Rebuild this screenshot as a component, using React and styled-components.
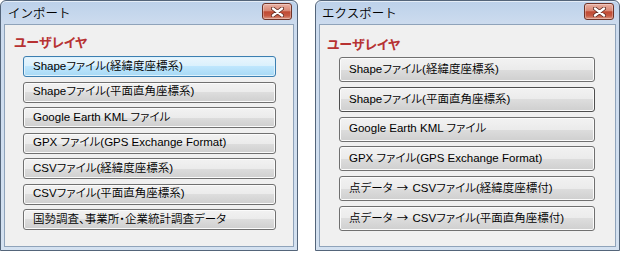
import styled, { createGlobalStyle } from "styled-components";

const GlobalStyle = createGlobalStyle`
  body {
    margin: 0;
    background: #fff;
    font-family: "Liberation Sans", "Noto Sans CJK JP", sans-serif;
  }
`;

const Screen = styled.div`
  display: flex;
  align-items: flex-start;
  gap: 17px;
  width: 622px;
  height: 255px;
`;

const Window = styled.div`
  box-sizing: border-box;
  width: ${(p) => p.$width}px;
  height: 251px;
  display: flex;
  flex-direction: column;
  border: 1px solid #54657a;
  border-radius: 6px 6px 0 0;
  padding: 0 3px 3px;
  background: linear-gradient(180deg, #bcd1ea 0px, #ccdbee 22px, #d4e1f0 100%);
  box-shadow: inset 0 1px 0 rgba(255, 255, 255, 0.6);
`;

const TitleBar = styled.div`
  height: 23px;
  display: flex;
  align-items: center;
  justify-content: space-between;
  padding: 0 2px 0 ${(p) => p.$inset}px;
`;

const Title = styled.span`
  font-family: "Noto Sans CJK JP", sans-serif;
  font-size: 12.5px;
  font-weight: 350;
  color: #000;
`;

const CloseButton = styled.div`
  box-sizing: border-box;
  width: 30px;
  height: 17px;
  margin-top: -2px;
  display: flex;
  align-items: center;
  justify-content: center;
  border: 1px solid #6f3327;
  border-radius: 3px;
  background: linear-gradient(
    180deg,
    #eab1a3 0%,
    #d98875 45%,
    #c04a33 52%,
    #c65a43 78%,
    #dd9a86 100%
  );
  box-shadow: inset 0 0 0 1px rgba(255, 255, 255, 0.3);
`;

const Client = styled.div`
  flex: 1;
  display: flex;
  flex-direction: column;
  background: #f0f0f0;
  border: 1px solid #8fa3ba;
  padding: ${(p) => p.$top}px 0 0 ${(p) => p.$left}px;
`;

const SectionLabel = styled.div`
  font-family: "Noto Sans CJK JP", sans-serif;
  font-size: 13px;
  line-height: 16px;
  font-weight: bold;
  color: #b73232;
  font-feature-settings: "palt";
  margin-bottom: ${(p) => p.$after}px;
`;

const ButtonList = styled.div`
  display: flex;
  flex-direction: column;
  gap: ${(p) => p.$gap}px;
  margin: 0 ${(p) => p.$right}px 0 ${(p) => p.$indent}px;
`;

const ActionButton = styled.button`
  box-sizing: border-box;
  height: ${(p) => p.$height}px;
  padding: 0 0 0 9px;
  text-align: left;
  font-family: "Liberation Sans", "Noto Sans CJK JP", sans-serif;
  font-size: 11.5px;
  font-weight: 350;
  line-height: 1;
  color: #000;
  font-feature-settings: "palt";
  border: 1px solid ${(p) => (p.$hot ? "#3c7fb1" : p.$focused ? "#4e4e4e" : "#707070")};
  border-radius: 3px;
  box-shadow: inset 0 0 0 1px ${(p) => (p.$hot ? "#dff2fc" : "#fbfbfb")};
  background: ${(p) =>
    p.$hot
      ? "linear-gradient(180deg, #eaf6fd 0%, #d9f0fc 50%, #bee6fd 50%, #a7d9f5 100%)"
      : "linear-gradient(180deg, #f2f2f2 0%, #ebebeb 50%, #dddddd 50%, #cfcfcf 100%)"};
  cursor: default;
`;

const Arrow = styled.span`
  font-family: "Noto Sans CJK JP", sans-serif;
  font-feature-settings: normal;
  margin: 0 1px;
`;

const CloseIcon = () => (
  <svg width="13" height="10" viewBox="0 0 13 10">
    <path d="M2 1.5 L11 8.5 M11 1.5 L2 8.5" stroke="#5e2a20" strokeWidth="4" strokeLinecap="round" />
    <path d="M2 1.5 L11 8.5 M11 1.5 L2 8.5" stroke="#ffffff" strokeWidth="2.4" strokeLinecap="round" />
  </svg>
);

// the arrow glyph comes from the CJK font so it keeps its full width
const ButtonLabel = ({ text }) => {
  const parts = text.split("→");
  if (parts.length === 1) return text;
  return (
    <>
      {parts[0]}
      <Arrow>→</Arrow>
      {parts[1]}
    </>
  );
};

const importItems = [
  "Shapeファイル(経緯度座標系)",
  "Shapeファイル(平面直角座標系)",
  "Google Earth KML ファイル",
  "GPX ファイル(GPS Exchange Format)",
  "CSVファイル(経緯度座標系)",
  "CSVファイル(平面直角座標系)",
  "国勢調査、事業所・企業統計調査データ",
];

const exportItems = [
  "Shapeファイル(経緯度座標系)",
  "Shapeファイル(平面直角座標系)",
  "Google Earth KML ファイル",
  "GPX ファイル(GPS Exchange Format)",
  "点データ → CSVファイル(経緯度座標付)",
  "点データ → CSVファイル(平面直角座標付)",
];

const Dialog = ({ title, items, width, layout, hotIndex, focusIndex }) => (
  <Window $width={width}>
    <TitleBar $inset={layout.titleInset}>
      <Title>{title}</Title>
      <CloseButton>
        <CloseIcon />
      </CloseButton>
    </TitleBar>
    <Client $top={layout.top} $left={layout.labelLeft}>
      <SectionLabel $after={layout.labelAfter}>ユーザレイヤ</SectionLabel>
      <ButtonList $gap={layout.gap} $indent={layout.indent} $right={layout.right}>
        {items.map((label, i) => (
          <ActionButton
            key={label}
            $height={layout.buttonHeight}
            $hot={i === hotIndex}
            $focused={i === focusIndex}
          >
            <ButtonLabel text={label} />
          </ActionButton>
        ))}
      </ButtonList>
    </Client>
  </Window>
);

export default function App() {
  return (
    <>
      <GlobalStyle />
      <Screen>
        <Dialog
          title="インポート"
          items={importItems}
          width={298}
          hotIndex={0}
          layout={{
            titleInset: 4,
            top: 9,
            labelLeft: 9,
            labelAfter: 6,
            gap: 4.5,
            indent: 9,
            right: 17,
            buttonHeight: 21,
          }}
        />
        <Dialog
          title="エクスポート"
          items={exportItems}
          width={305}
          focusIndex={1}
          layout={{
            titleInset: 3,
            top: 11,
            labelLeft: 7,
            labelAfter: 5,
            gap: 4.8,
            indent: 12,
            right: 20,
            buttonHeight: 25,
          }}
        />
      </Screen>
    </>
  );
}
